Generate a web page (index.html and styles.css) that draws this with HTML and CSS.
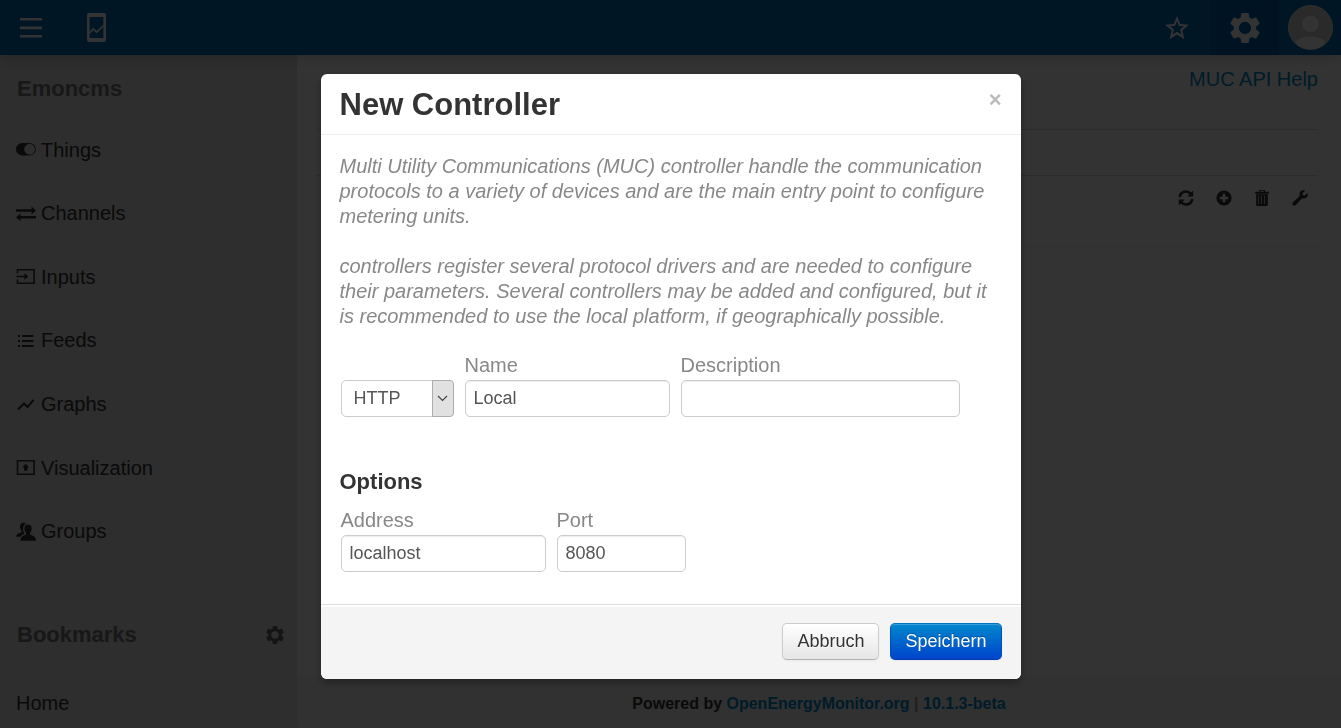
FILE: index.html
```html
<!DOCTYPE html>
<html lang="de">
<head>
<meta charset="utf-8">
<title>Emoncms</title>
<link rel="stylesheet" href="styles.css">
</head>
<body>
<svg class="defs" aria-hidden="true">
  <symbol id="gear" viewBox="2 2 20 20"><path fill-rule="evenodd" d="M19.43 12.98c.04-.32.07-.64.07-.98s-.03-.66-.07-.98l2.11-1.65c.19-.15.24-.42.12-.64l-2-3.46c-.12-.22-.39-.3-.61-.22l-2.49 1c-.52-.4-1.08-.73-1.69-.98l-.38-2.65C14.46 2.18 14.25 2 14 2h-4c-.25 0-.46.18-.49.42l-.38 2.65c-.61.25-1.17.59-1.69.98l-2.49-1c-.23-.09-.49 0-.61.22l-2 3.46c-.13.22-.07.49.12.64l2.11 1.65c-.04.32-.07.65-.07.98s.03.66.07.98l-2.11 1.65c-.19.15-.24.42-.12.64l2 3.46c.12.22.39.3.61.22l2.49-1c.52.4 1.08.73 1.69.98l.38 2.65c.03.24.24.42.49.42h4c.25 0 .46-.18.49-.42l.38-2.65c.61-.25 1.17-.59 1.69-.98l2.49 1c.23.09.49 0 .61-.22l2-3.46c.12-.22.07-.49-.12-.64zM12 16.100a4.100 4.100 0 1 1 0-8.200 4.100 4.100 0 0 1 0 8.200z"/></symbol>
</svg>

<header class="topbar">
  <div class="topbar-group">
    <button class="top-btn" aria-label="Menu"><svg width="22" height="20" viewBox="0 0 22 20"><path d="M0 0h22v2.600H0zM0 8.600h22v2.600H0zM0 17h22v2.600H0z"/></svg></button>
    <button class="top-btn" aria-label="Apps"><svg width="19" height="29" viewBox="0 0 19 29"><path fill-rule="evenodd" d="M2 0h15a2 2 0 0 1 2 2v25a2 2 0 0 1-2 2H2a2 2 0 0 1-2-2V2a2 2 0 0 1 2-2zM2.600 4v21h13.800V4z"/><path class="thin" d="M2.500 20l3.700-4 3.500 3.200 6.800-6.500"/></svg></button>
  </div>
  <div class="topbar-group">
    <button class="top-btn" aria-label="Bookmark"><svg width="24" height="24" viewBox="0 0 24 24"><path fill-rule="evenodd" d="M12 0l3.200 8.100 8.800.7-6.700 5.700 2.100 8.700-7.400-4.600-7.400 4.600 2.100-8.700L0 8.800l8.800-.7zm0 5l-1.900 4.800-5.100.4 3.900 3.300-1.200 5 4.300-2.700 4.300 2.700-1.200-5L19 10.200l-5.100-.4z"/></svg></button>
    <button class="top-btn active" aria-label="Setup"><svg width="30" height="30"><use href="#gear"/></svg></button>
    <button class="top-btn avatar" aria-label="Account"><svg width="45" height="45" viewBox="0 0 45 45"><circle class="avatar-bg" cx="22.500" cy="22.500" r="22"/><circle cx="22.500" cy="19" r="8.200"/><path d="M7.500 37.500C9 34 15 31.500 22.500 31.500S36 34 37.500 37.500C33.500 42 28 44 22.500 44S11.500 42 7.500 37.500z"/></svg></button>
  </div>
</header>

<div class="page">
  <nav class="sidebar">
    <h4 class="side-title">Emoncms</h4>
    <ul class="side-list">
      <li><a href="#"><svg viewBox="0 0 20 20"><path fill-rule="evenodd" d="M6.200 3h7.400a6.200 6.200 0 0 1 0 12.400H6.200A6.200 6.200 0 0 1 6.200 3zm7.400.8a5.400 5.400 0 1 0 0 10.800 5.400 5.400 0 0 0 0-10.800z"/></svg>Things</a></li>
      <li><a href="#"><svg viewBox="0 0 20 20"><path d="M0 5.200h15.500V2.500L20 6.500l-4.500 4V7.800H0zM20 12H4.500V9.500L0 13.300l4.500 4v-2.700H20z"/></svg>Channels</a></li>
      <li><a href="#"><svg viewBox="0 0 20 20"><path class="thin" d="M1.500 6.500V2.700h16.600v13.500H1.500V12.500M.5 9.500h9"/><path d="M8.500 6l3.800 3.500-3.800 3.500z"/></svg>Inputs</a></li>
      <li><a href="#"><svg viewBox="0 0 20 20"><path d="M2 4h2v2H2zM6 4h11.500v2H6zM2 9h2v2H2zM6 9h11.500v2H6zM2 14h2v2H2zM6 14h11.500v2H6z"/></svg>Feeds</a></li>
      <li><a href="#"><svg viewBox="0 0 20 20"><path class="stroke" d="M2 14.500l6-6 3.500 3.500L17.500 5"/></svg>Graphs</a></li>
      <li><a href="#"><svg viewBox="0 0 20 20"><path class="thin" d="M1.500 2.700h16.600v13.500H1.500z"/><path d="M9.700 5.800l3.500 3.700h-1.800v3.200H8V9.500H6.200z"/></svg>Visualization</a></li>
      <li><a href="#"><svg viewBox="0 0 20 20"><path d="M12 2.500c2.400 0 3.700 1.500 3.700 4 0 1.800-.7 3.500-1.600 4.400v1.500c2 1 5.900 1.600 5.900 5.600v.8H4.500V18c0-3.500 3.800-4.600 5.500-5.600v-1.500c-1-1-1.600-2.600-1.600-4.400 0-2.500 1.300-4 3.600-4z"/><path d="M9.800 1.500C8.800.7 8 .8 7.300.8c-2.200 0-3.300 1.400-3.300 3.700 0 1.700.5 3.100 1.400 4v1.400C3.800 11 0 11.500 0 14.800h4.500c.7-1.300 2.700-2.300 4-3.100-1.700-3-2.300-7.500 1.300-10.200z"/></svg>Groups</a></li>
    </ul>
    <h4 class="side-title bookmarks">Bookmarks <button class="side-gear" aria-label="Edit bookmarks"><svg width="18" height="18"><use href="#gear"/></svg></button></h4>
    <ul class="side-list single"><li><a href="#">Home</a></li></ul>
  </nav>

  <div class="content">
    <main class="main">
      <div class="help"><a href="#">MUC API Help</a></div>
      <div class="list-head"></div>
      <div class="list-row">
        <button aria-label="Refresh"><svg viewBox="0 0 16 16"><path class="bold" d="M1.700 7A6.300 6.300 0 0 1 12.800 3.800M14.300 9A6.300 6.300 0 0 1 3.200 12.200"/><path d="M15.200.5v6H9.200zM.8 15.500v-6h6z"/></svg></button>
        <button aria-label="Add"><svg viewBox="0 0 16 16"><path fill-rule="evenodd" d="M8 .4a7.600 7.600 0 1 1 0 15.200A7.600 7.600 0 0 1 8 .4zM6.700 3.800v2.900H3.800v2.600h2.900v2.900h2.600V9.300h2.900V6.700H9.300V3.800z"/></svg></button>
        <button aria-label="Delete"><svg viewBox="0 0 16 16"><path fill-rule="evenodd" d="M5 0h6v1.700h3.800v2H1.200v-2H5zm1.200.8v.9h3.600v-.9zM2.200 4.300h11.600V15a1 1 0 0 1-1 1H3.200a1 1 0 0 1-1-1zm2.200 1.500V14h.7V5.800zm2.900 0V14H8V5.800zm2.900 0V14h.7V5.800z"/></svg></button>
        <button aria-label="Configure"><svg viewBox="0 0 16 16"><path d="M13.200.6L10.500 3.300l.4 1.900 2 .4L15.600 3c.8 2.200-.2 4.200-1.900 5.100-1.200.7-2.500.5-3.500.2l-6.500 6.800c-.9.8-2.100.8-2.800 0-.8-.8-.7-2 .1-2.800l6.700-6.400C7 3 8 1.500 9.400.7c1.200-.6 2.600-.6 3.800-.1z"/></svg></button>
      </div>
    </main>
    <footer class="footer">Powered by <a href="#">OpenEnergyMonitor.org</a> <span>|</span> <a href="#">10.1.3-beta</a></footer>
  </div>
</div>

<div class="backdrop">
  <form class="modal" role="dialog" aria-labelledby="modal-title">
    <div class="modal-header">
      <h3 id="modal-title">New Controller</h3>
      <button type="button" class="close" aria-label="Close">×</button>
    </div>
    <div class="modal-body">
      <p class="intro">Multi Utility Communications (MUC) controller handle the communication protocols to a variety of devices and are the main entry point to configure metering units.</p>
      <p class="intro">controllers register several protocol drivers and are needed to configure their parameters. Several controllers may be added and configured, but it is recommended to use the local platform, if geographically possible.</p>
      <div class="fields">
        <div class="select-box">
          <select aria-label="Type"><option>HTTP</option></select>
          <span class="select-arrow"><svg width="11" height="7" viewBox="0 0 11 7"><path d="M1 1l4.500 4.500L10 1"/></svg></span>
        </div>
        <div class="field medium"><label for="name">Name</label><input id="name" type="text" value="Local"></div>
        <div class="field wide"><label for="desc">Description</label><input id="desc" type="text"></div>
      </div>
      <h4 class="options">Options</h4>
      <div class="fields">
        <div class="field medium"><label for="address">Address</label><input id="address" type="text" value="localhost"></div>
        <div class="field narrow"><label for="port">Port</label><input id="port" type="text" value="8080"></div>
      </div>
    </div>
    <div class="modal-footer">
      <button type="button" class="btn">Abbruch</button>
      <button type="button" class="btn primary">Speichern</button>
    </div>
  </form>
</div>
</body>
</html>
```
FILE: styles.css
```css
* { box-sizing: border-box; }

body {
  margin: 0;
  height: 100vh;
  display: flex;
  flex-direction: column;
  overflow: hidden;
  background: #fff;
  color: #333;
  font: 20px/25px "Liberation Sans", Arial, sans-serif;
}

h3, h4, p, ul { margin: 0; padding: 0; }
ul { list-style: none; }
a { color: #0088cc; text-decoration: none; }
button, input, select { font-family: inherit; margin: 0; }
svg { display: block; fill: currentColor; }
.stroke { fill: none; stroke: currentColor; stroke-width: 2; }
.thin { fill: none; stroke: currentColor; stroke-width: 1.6; }
.bold { fill: none; stroke: currentColor; stroke-width: 2.6; }
.defs { position: absolute; width: 0; height: 0; }

/* Top bar */
.topbar {
  display: flex;
  justify-content: space-between;
  flex: none;
  height: 55px;
  background: #006dba;
  box-shadow: 0 1px 12px rgba(0, 0, 0, .25);
  position: relative;
}
.topbar-group { display: flex; }
.top-btn {
  display: flex;
  align-items: center;
  justify-content: center;
  width: 68px;
  padding: 0;
  border: 0;
  background: none;
  color: #fff;
}
.topbar-group:first-child .top-btn { width: 68px; }
.topbar-group:first-child .top-btn:first-child { width: 62px; }
.top-btn.active { background: #0062a8; }
.top-btn.avatar { width: 62px; }
.avatar-bg { fill: #d0d0d0; stroke: #e6e6e6; }

/* Sidebar */
.page { display: flex; flex: 1; min-height: 0; }
.sidebar {
  flex: none;
  width: 297px;
  overflow: hidden;
  background: #e3e3e3;
}
.side-title {
  display: flex;
  align-items: center;
  justify-content: space-between;
  height: 62px;
  padding: 4px 13px 0 17px;
  font-size: 22px;
  color: #777;
}
.side-title.bookmarks { height: 113px; padding-top: 30px; }
.side-gear { padding: 0; border: 0; background: none; color: #666; }
.side-list {
  display: grid;
  grid-auto-rows: 1fr;
  min-height: 446px;
  border-bottom: 1px solid #ebebeb;
}
.side-list.single { min-height: 52px; }
.side-list li { display: flex; border-top: 1px solid #ebebeb; }
.side-list a {
  display: flex;
  flex: 1;
  align-items: center;
  gap: 5px;
  padding: 2px 16px 0;
  color: #333;
}
.side-list svg { width: 20px; height: 20px; }

/* Page content */
.content { display: flex; flex-direction: column; flex: 1; min-width: 0; }
.main { flex: 1; padding: 12px 23px 0 20px; }
.help { height: 62px; text-align: right; }
.list-head { height: 46px; border-top: 1px solid #dadada; }
.list-row {
  display: flex;
  justify-content: flex-end;
  align-items: flex-start;
  gap: 22px;
  height: 72px;
  padding: 14px 10px 0 0;
  border-top: 1px solid #dadada;
  border-bottom: 1px solid #f0f0f0;
}
.list-row button { padding: 0; border: 0; background: none; color: #333; }
.list-row svg { width: 16px; height: 16px; }
.footer {
  height: 53px;
  padding-top: 16px;
  background: #f3f3f3;
  font-size: 16px;
  font-weight: bold;
  text-align: center;
}
.footer span { color: #999; }

/* Dialog */
.backdrop {
  position: fixed;
  inset: 0;
  padding: 74px 20px 20px;
  background: rgba(0, 0, 0, .8);
}
.modal {
  max-width: 700px;
  margin: 0 auto;
  overflow: hidden;
  border-radius: 6px;
  background: #fff;
  box-shadow: 0 4px 9px rgba(0, 0, 0, .3);
}
.modal-header {
  display: flex;
  justify-content: space-between;
  padding: 12px 19px 10px;
  border-bottom: 1px solid #eee;
}
.modal-header h3 { font-size: 31px; line-height: 38px; }
.close {
  height: 28px;
  padding: 0;
  border: 0;
  background: none;
  color: #bbb;
  font-size: 22px;
  font-weight: bold;
}
.modal-body { padding: 19px 19px 32px; }
.intro { color: #888; font-style: italic; }
.intro + .intro { margin: 25px 0 24px; }
.fields { display: flex; align-items: flex-end; gap: 11px; padding-left: 1px; }
.field { display: flex; flex-direction: column; gap: 2px; color: #888; }
.medium { width: 205px; }
.wide { width: 279px; }
.narrow { width: 129px; }
.field input, .select-box select {
  width: 100%;
  height: 37px;
  padding: 0 8px 1px;
  border: 1px solid #ccc;
  border-radius: 5px;
  background: #fff;
  color: #555;
  font-size: 18px;
  box-shadow: inset 0 1px 1px rgba(0, 0, 0, .075);
}
.select-box { display: grid; width: 113px; }
.select-box select {
  grid-area: 1 / 1;
  appearance: none;
  padding: 0 12px 1px;
  box-shadow: none;
}
.select-arrow {
  grid-area: 1 / 1;
  justify-self: end;
  display: grid;
  place-items: center;
  width: 22px;
  border: 1px solid #adadad;
  border-radius: 0 4px 4px 0;
  background: #e1e1e1;
  pointer-events: none;
}
.select-arrow path { fill: none; stroke: #444; stroke-width: 1.2; }
.options { margin: 52px 0 14px; font-size: 22px; }
.modal-footer {
  display: flex;
  justify-content: flex-end;
  gap: 11px;
  padding: 18px 19px 19px;
  border-top: 1px solid #ddd;
  background: #f4f4f4;
  box-shadow: inset 0 2px 0 #fff;
}
.btn {
  height: 37px;
  padding: 0 14px;
  border: 1px solid #ccc;
  border-bottom-color: #b3b3b3;
  border-radius: 5px;
  background: linear-gradient(#fff, #e6e6e6);
  box-shadow: inset 0 1px 0 rgba(255, 255, 255, .2), 0 1px 2px rgba(0, 0, 0, .05);
  color: #333;
  font-size: 18px;
  text-shadow: 0 1px 1px rgba(255, 255, 255, .75);
}
.btn.primary {
  border-color: #0074bb #0050b8 #003bb0;
  background: linear-gradient(#0088cc, #0044cc);
  color: #fff;
  text-shadow: 0 -1px 0 rgba(0, 0, 0, .25);
}
```
